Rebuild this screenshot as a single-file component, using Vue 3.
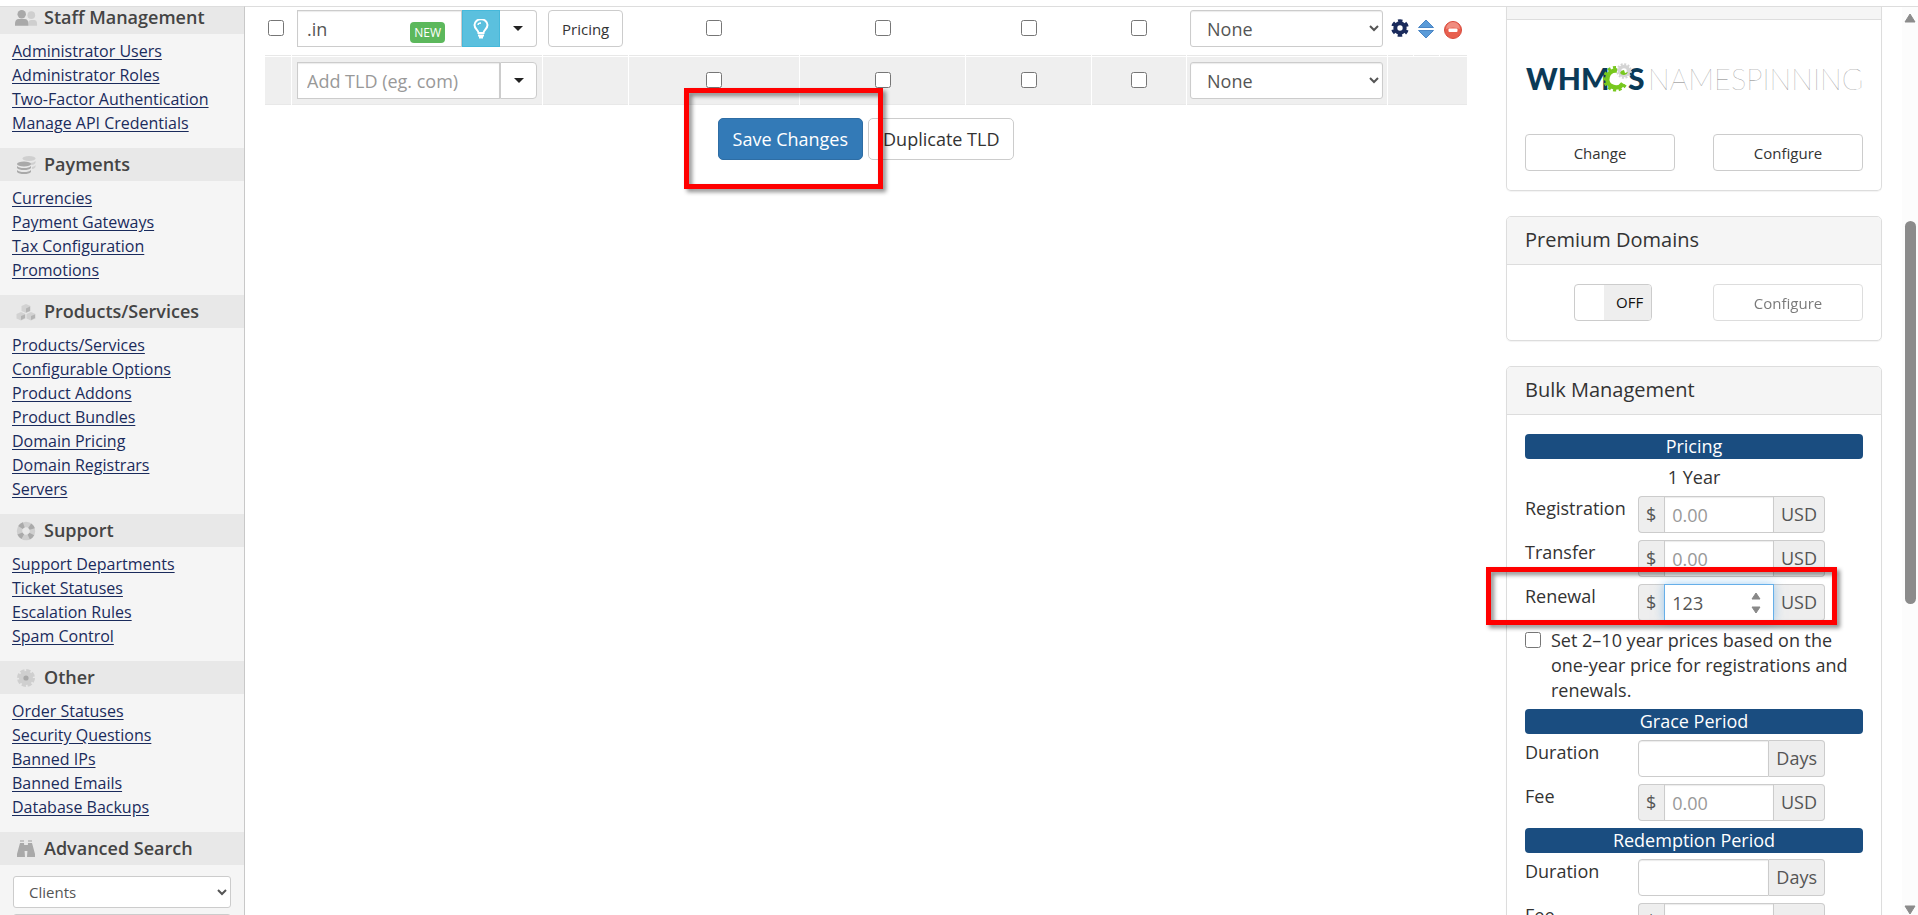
<template>
    <div class="page">
        <aside class="sidebar">
            <section v-for="group in menu" :key="group.title" class="menu-group">
                <h2 class="menu-title">
                    <svg v-if="group.icon === 'users'" class="menu-icon wide" viewBox="0 0 24 20">
                        <g fill="#cfcfcf">
                            <circle cx="17" cy="7" r="4" />
                            <path d="M14 18v-3q0-3 3-3h3q3 0 3 4v2z" />
                        </g>
                        <g fill="#a9a9a9">
                            <circle cx="7" cy="6" r="4.4" />
                            <path d="M0 18v-2q0-5 4-5h6q4 0 4 5v2z" />
                        </g>
                    </svg>
                    <svg v-else-if="group.icon === 'coins'" class="menu-icon" viewBox="0 0 20 20">
                        <g fill="#cfcfcf">
                            <ellipse cx="13" cy="3.5" rx="6.5" ry="2.5" />
                            <path d="M14 8q4 0 5.500-2v2q-1 2-4 2zM16 12q3-.5 3.500-2v2q-1 2-3.500 2z" />
                        </g>
                        <g fill="#a9a9a9">
                            <ellipse cx="8" cy="9" rx="7" ry="2.500" />
                            <path d="M1 11q2 2 7 2t7-2v2q-2 2-7 2t-7-2zM1 15q2 2 7 2t7-2v2q-2 2-7 2t-7-2z" />
                        </g>
                    </svg>
                    <svg v-else-if="group.icon === 'boxes'" class="menu-icon" viewBox="0 0 20 20">
                        <g fill="#d2d2d2">
                            <path d="M10 2l4.500 2v5L10 11 5.500 9V4z" />
                            <path d="M5 10l4.500 2v4.500L5 18.500.5 16.500V12z" />
                            <path d="M15 10l4.500 2v4.500l-4.500 2-4.500-2V12z" />
                        </g>
                        <path d="M10 6.500l4-2V9l-4 1.500zM5 14l4-1.500v3.500l-4 2zM15 14l4-1.500v3.500l-4 2z" fill="#b4b4b4" />
                    </svg>
                    <svg v-else-if="group.icon === 'ring'" class="menu-icon" viewBox="0 0 20 20">
                        <circle cx="10" cy="10" r="6.500" fill="none" stroke="#cfcfcf" stroke-width="5.500" />
                        <circle cx="10" cy="10" r="6.500" fill="none" stroke="#aaaaaa" stroke-width="5.500" stroke-dasharray="4 6.210" stroke-dashoffset="-3.100" />
                    </svg>
                    <svg v-else-if="group.icon === 'cog'" class="menu-icon" viewBox="0 0 20 20">
                        <circle cx="10" cy="10" r="7" fill="#cfcfcf" />
                        <circle cx="10" cy="10" r="7.500" fill="none" stroke="#cfcfcf" stroke-width="3" stroke-dasharray="4.200 1.690" />
                        <circle cx="10" cy="10" r="2.600" fill="#a9a9a9" />
                    </svg>
                    <svg v-else class="menu-icon" viewBox="0 0 20 20">
                        <path d="M4 1h4v2H4zM12 1h4v2h-4z" fill="#c4c4c4" />
                        <path d="M4 4h4l1 14H1v-3zM12 4h4l3 11v3h-8zM8 6h4v6H8z" fill="#a9a9a9" />
                    </svg>
                    {{ group.title }}
                </h2>
                <ul v-if="group.links.length" class="menu-links">
                    <li v-for="link in group.links" :key="link"><a href="#">{{ link }}</a></li>
                </ul>
            </section>
            <form class="search" @submit.prevent>
                <select v-model="searchType" aria-label="Search type">
                    <option>Clients</option>
                </select>
                <select v-model="searchField" aria-label="Search field">
                    <option>Client Name</option>
                </select>
            </form>
        </aside>

        <main class="content">
            <div class="tld-area">
                <table class="tlds">
                    <colgroup>
                        <col v-for="(col, index) in cols" :key="index" :class="col">
                    </colgroup>
                    <tbody>
                        <tr>
                            <td class="center select-cell"><input type="checkbox" aria-label="Select .in"></td>
                            <td>
                                <div class="tld-input">
                                    <input v-model="tld" class="field" type="text" aria-label="TLD">
                                    <span class="badge-new">NEW</span>
                                    <button class="spotlight" type="button" aria-label="Spotlight">
                                        <svg width="16" height="20" viewBox="0 0 16 20" fill="none" stroke="#fff" stroke-width="2">
                                            <path d="M5.500 14c0-3-4-4-4-8a6.300 5.500 0 0 1 13 0c0 4-4 5-4 8z" />
                                            <path d="M5 6q0-2 3-2" stroke-width="1.300" />
                                            <path d="M5 16.500h6M6 18.500h4" />
                                        </svg>
                                    </button>
                                    <button class="drop" type="button" aria-label="TLD options"><i class="caret"></i></button>
                                </div>
                            </td>
                            <td><button class="btn btn-sm btn-pricing" type="button">Pricing</button></td>
                            <td v-for="option in options" :key="option" class="center">
                                <input type="checkbox" :aria-label="option">
                            </td>
                            <td class="registrar">
                                <select class="field" aria-label="Auto registration">
                                    <option>None</option>
                                </select>
                            </td>
                            <td class="icon-cell">
                                <svg width="18" height="18" viewBox="0 0 18 18">
                                    <circle cx="9" cy="9" r="4.700" fill="none" stroke="#1a2b5c" stroke-width="4" />
                                    <circle cx="9" cy="9" r="7.200" fill="none" stroke="#1a2b5c" stroke-width="3.200" stroke-dasharray="4.200 3.340" stroke-dashoffset="2.100" transform="rotate(30 9 9)" />
                                </svg>
                            </td>
                            <td class="icon-cell">
                                <svg width="18" height="20" viewBox="0 0 18 20">
                                    <path d="M9 1l7.500 7.500H1.500z" fill="#5b9bd8" stroke="#4a86c5" />
                                    <path d="M9 19l7.500-7.500H1.500z" fill="#5b9bd8" stroke="#4a86c5" />
                                </svg>
                            </td>
                            <td class="icon-cell">
                                <svg width="20" height="20" viewBox="0 0 20 20">
                                    <circle cx="10" cy="11" r="8.500" fill="#e8604f" stroke="#d84a3c" />
                                    <path d="M3 10a7 7 0 0 1 14 0q-7-3-14 0z" fill="#f08d80" />
                                    <rect x="5.500" y="9.500" width="9" height="3.500" rx="1" fill="#fff" />
                                </svg>
                            </td>
                        </tr>
                        <tr class="add-row">
                            <td></td>
                            <td>
                                <div class="tld-input">
                                    <input class="field" type="text" placeholder="Add TLD (eg. com)" aria-label="Add TLD">
                                    <button class="drop" type="button" aria-label="TLD options"><i class="caret"></i></button>
                                </div>
                            </td>
                            <td></td>
                            <td v-for="option in options" :key="option" class="center">
                                <input type="checkbox" :aria-label="option">
                            </td>
                            <td class="registrar">
                                <select class="field" aria-label="Auto registration">
                                    <option>None</option>
                                </select>
                            </td>
                            <td colspan="3"></td>
                        </tr>
                    </tbody>
                </table>
                <div class="actions">
                    <span class="marked">
                        <button class="btn btn-primary" type="button">Save Changes</button>
                        <span class="marker marker-save"></span>
                    </span>
                    <button class="btn" type="button">Duplicate TLD</button>
                </div>
            </div>

            <div class="panels">
                <section class="panel panel-lookup">
                    <div class="panel-edge"></div>
                    <div class="panel-body">
                        <svg class="logo" viewBox="0 0 338 32" role="img" aria-label="WHMCS Namespinning">
                            <text x="1" y="29" class="logo-bold">WHM</text>
                            <text x="103" y="29" class="logo-bold">S</text>
                            <circle cx="99" cy="10" r="4.500" fill="none" stroke="#d4d4d4" stroke-width="3.500" />
                            <circle cx="99" cy="10" r="6.800" fill="none" stroke="#d4d4d4" stroke-width="2" stroke-dasharray="2 1.560" />
                            <path d="M92 9.500a8.500 8.500 0 1 0 6 13" fill="none" stroke="#78c81e" stroke-width="4.500" />
                            <path d="M91 6.500a11.300 11.300 0 1 0 10 16" fill="none" stroke="#78c81e" stroke-width="3" stroke-dasharray="3 2.500" />
                            <path d="M95 12a4.500 4.500 0 0 0 8-1l-3 1-1-3a4.500 4.500 0 0 0-4 3z" fill="#78c81e" />
                            <text x="123" y="29" class="logo-thin">NAMESPINNING</text>
                        </svg>
                        <div class="button-row">
                            <button class="btn btn-sm" type="button">Change</button>
                            <button class="btn btn-sm" type="button">Configure</button>
                        </div>
                    </div>
                </section>

                <section class="panel">
                    <h3 class="panel-title">Premium Domains</h3>
                    <div class="panel-body button-row">
                        <label class="toggle">
                            <input v-model="premium" type="checkbox">
                            <span class="toggle-text">{{ premium ? 'ON' : 'OFF' }}</span>
                        </label>
                        <button class="btn btn-sm" type="button" disabled>Configure</button>
                    </div>
                </section>

                <section class="panel">
                    <h3 class="panel-title">Bulk Management</h3>
                    <div class="panel-body">
                        <template v-for="group in bulk" :key="group.title">
                            <h4 class="bar">{{ group.title }}</h4>
                            <p v-if="group.term" class="term">{{ group.term }}</p>
                            <div v-for="row in group.rows" :key="row.id" class="bulk-row">
                                <label :for="row.id">{{ row.label }}</label>
                                <div class="input-group" :class="{ focused: row.focused }">
                                    <span v-if="row.unit === 'USD'" class="addon addon-left">$</span>
                                    <div class="amount">
                                        <input :id="row.id" v-model="row.value" type="number" :placeholder="row.unit === 'USD' ? '0.00' : ''">
                                        <svg v-if="row.focused" class="spin" width="10" height="22" viewBox="0 0 10 22">
                                            <path d="M5 1l4 6H1zM5 21l4-6H1z" fill="#888" stroke="#888" stroke-linejoin="round" />
                                        </svg>
                                    </div>
                                    <span class="addon addon-right">{{ row.unit }}</span>
                                </div>
                                <span v-if="row.focused" class="marker marker-renewal"></span>
                            </div>
                            <label v-if="group.note" class="note">
                                <input v-model="multiYear" type="checkbox">
                                <span>{{ group.note }}</span>
                            </label>
                        </template>
                    </div>
                </section>
            </div>
        </main>

        <div class="scrollbar">
            <svg width="12" height="10" viewBox="0 0 12 10"><path d="M6 1l5 8H1z" fill="#8b8b8b" stroke="#8b8b8b" stroke-linejoin="round" /></svg>
            <div class="track"><div class="thumb"></div></div>
            <svg width="12" height="10" viewBox="0 0 12 10"><path d="M6 9l5-8H1z" fill="#8b8b8b" stroke="#8b8b8b" stroke-linejoin="round" /></svg>
        </div>
    </div>
</template>

<script setup>
import { ref, reactive } from 'vue'

const menu = [
    { title: 'Staff Management', icon: 'users', links: ['Administrator Users', 'Administrator Roles', 'Two-Factor Authentication', 'Manage API Credentials'] },
    { title: 'Payments', icon: 'coins', links: ['Currencies', 'Payment Gateways', 'Tax Configuration', 'Promotions'] },
    { title: 'Products/Services', icon: 'boxes', links: ['Products/Services', 'Configurable Options', 'Product Addons', 'Product Bundles', 'Domain Pricing', 'Domain Registrars', 'Servers'] },
    { title: 'Support', icon: 'ring', links: ['Support Departments', 'Ticket Statuses', 'Escalation Rules', 'Spam Control'] },
    { title: 'Other', icon: 'cog', links: ['Order Statuses', 'Security Questions', 'Banned IPs', 'Banned Emails', 'Database Backups'] },
    { title: 'Advanced Search', icon: 'binoculars', links: [] }
]

const cols = ['c-select', 'c-tld', 'c-pricing', 'c-dns', 'c-email', 'c-id', 'c-epp', 'c-registrar', 'c-icon', 'c-icon', 'c-icon-last']
const options = ['DNS Management', 'Email Forwarding', 'ID Protection', 'EPP Code']

const searchType = ref('Clients')
const searchField = ref('Client Name')
const tld = ref('.in')
const premium = ref(false)
const multiYear = ref(false)

const bulk = reactive([
    {
        title: 'Pricing',
        term: '1 Year',
        rows: [
            { id: 'registration', label: 'Registration', unit: 'USD', value: '' },
            { id: 'transfer', label: 'Transfer', unit: 'USD', value: '' },
            { id: 'renewal', label: 'Renewal', unit: 'USD', value: '123', focused: true }
        ],
        note: 'Set 2–10 year prices based on the one-year price for registrations and renewals.'
    },
    {
        title: 'Grace Period',
        rows: [
            { id: 'grace-duration', label: 'Duration', unit: 'Days', value: '' },
            { id: 'grace-fee', label: 'Fee', unit: 'USD', value: '' }
        ]
    },
    {
        title: 'Redemption Period',
        rows: [
            { id: 'redemption-duration', label: 'Duration', unit: 'Days', value: '' },
            { id: 'redemption-fee', label: 'Fee', unit: 'USD', value: '' }
        ]
    }
])
</script>

<style>
body {
    margin: 0;
    overflow: hidden;
    background: #fff;
}
</style>

<style scoped>
.page,
.page * {
    box-sizing: border-box;
}

.page {
    display: flex;
    height: 100vh;
    padding-top: 6px;
    overflow: hidden;
    color: #333;
    font-family: "Open Sans", "Noto Sans", sans-serif;
    font-size: 18px;
    line-height: 25px;
}

button,
input,
select {
    margin: 0;
    font-family: inherit;
}

h2,
h3,
h4,
p,
ul {
    margin: 0;
    padding: 0;
    font-weight: 400;
}

input[type="checkbox"] {
    width: 16px;
    height: 16px;
}

/* Sidebar */
.sidebar {
    flex: 0 0 245px;
    overflow: hidden;
    border-top: 1px solid #ddd;
    border-right: 1px solid #c8c8c8;
    background: #f5f5f5;
}

.menu-title {
    display: flex;
    align-items: center;
    gap: 8px;
    height: 33px;
    padding-left: 15px;
    background: #e8e8e8;
    color: #444;
    font-size: 18px;
    font-weight: 600;
}

.menu-group:first-child .menu-title {
    height: 27px;
    padding-bottom: 6px;
}

.menu-icon {
    width: 20px;
    height: 20px;
    margin-left: 1px;
}

.menu-icon.wide {
    width: 23px;
    margin: 0 -2px 0 0;
}

.menu-links {
    padding: 5px 12px 13px;
    list-style: none;
    font-size: 16px;
    line-height: 24px;
}

.menu-links a {
    color: #1a2b5c;
    text-decoration: underline;
    text-underline-offset: 2px;
}

.search {
    display: flex;
    flex-direction: column;
    gap: 6px;
    padding: 11px 13px;
}

.search select {
    height: 32px;
    padding: 0 0 0 11px;
    border: 1px solid #ccc;
    border-radius: 3px;
    background: #fff;
    color: #555;
    font-size: 15px;
}

/* Content */
.content {
    flex: 1;
    display: grid;
    grid-template-columns: minmax(0, 1fr) 376px;
    align-items: start;
    gap: 38px;
    min-width: 0;
    padding: 0 20px 0 19px;
    overflow: hidden;
    border-top: 1px solid #ddd;
}

.tlds {
    width: 100%;
    table-layout: fixed;
    border-spacing: 1px;
}

.c-select { width: 26px; }
.c-tld { width: 250px; }
.c-pricing { width: 85px; }
.c-dns { width: 14.3%; }
.c-email { width: 13.8%; }
.c-id { width: 10.5%; }
.c-registrar { width: 200px; }
.c-icon { width: 25px; }
.c-icon-last { width: 27px; }

.tlds td {
    height: 48px;
    padding: 2px 5px 8px;
    border-bottom: 1px solid #e8e8e8;
    vertical-align: top;
}

.tlds .add-row td {
    padding-top: 5px;
    padding-bottom: 5px;
    background: #efefef;
}

.tlds td.center {
    padding-right: 0;
    padding-left: 0;
    text-align: center;
}

.tlds td.select-cell {
    padding-right: 4px;
}

.tlds td.center input {
    display: block;
    margin: 10px auto 0;
}

.tlds td.registrar {
    padding-right: 4px;
    padding-left: 3px;
}

.tlds td.icon-cell {
    padding: 11px 0 0 3px;
}

.icon-cell svg {
    display: block;
}

.field {
    width: 100%;
    height: 37px;
    padding: 0 9px;
    border: 1px solid #ccc;
    border-radius: 0;
    background: #fff;
    box-shadow: inset 0 1px 1px rgba(0, 0, 0, 0.08);
    color: #555;
    font-size: 18px;
}

select.field {
    padding: 0 0 0 12px;
    border-radius: 3px;
}

.field::placeholder,
.amount input::placeholder {
    color: #999;
    opacity: 1;
}

.tld-input {
    position: relative;
    display: flex;
}

.tld-input .field {
    flex: 1;
    min-width: 0;
}

.badge-new {
    position: absolute;
    top: 12px;
    right: 92px;
    padding: 0 4px;
    border-radius: 4px;
    background: #5cb85c;
    color: #fff;
    font-size: 12px;
    line-height: 21px;
}

.spotlight,
.drop {
    display: flex;
    align-items: center;
    justify-content: center;
    flex: 0 0 38px;
    height: 37px;
    padding: 0;
    border: 1px solid #ccc;
    background: #fff;
}

.spotlight {
    border-color: #46b8da;
    background: #5bc0de;
}

.drop {
    flex-basis: 37px;
    border-radius: 0 4px 4px 0;
}

.spotlight + .drop {
    border-left: 0;
}

.caret {
    border: 5px solid transparent;
    border-top-color: #222;
    border-bottom: 0;
}

.btn {
    height: 42px;
    padding: 0 14px;
    border: 1px solid #ccc;
    border-radius: 5px;
    background: #fff;
    color: #333;
    font-size: 18px;
}

.btn-primary {
    border-color: #2e6da4;
    background: #337ab7;
    color: #fff;
}

.btn-sm {
    height: 37px;
    padding: 0 13px;
    border-radius: 4px;
    font-size: 15px;
}

.btn:disabled {
    opacity: 0.65;
}

.btn-pricing {
    width: 75px;
}

.actions {
    display: flex;
    justify-content: center;
    gap: 5px;
    margin-top: 12px;
}

.marked {
    position: relative;
}

.marker {
    position: absolute;
    border: 5px solid #f00;
    filter: drop-shadow(3px 3px 2px rgba(0, 0, 0, 0.45));
    pointer-events: none;
}

.marker-save {
    top: -30px;
    right: -20px;
    bottom: -29px;
    left: -34px;
}

/* Panels */
.panel {
    margin-bottom: 25px;
    border: 1px solid #ddd;
    border-radius: 5px;
    box-shadow: 0 1px 1px rgba(0, 0, 0, 0.05);
}

.panel-lookup {
    border-top: 0;
    border-radius: 0 0 5px 5px;
}

.panel-edge {
    height: 13px;
    border-bottom: 1px solid #ddd;
    background: #f5f5f5;
}

.panel-title {
    height: 48px;
    padding: 0 18px;
    border-bottom: 1px solid #ddd;
    border-radius: 4px 4px 0 0;
    background: #f5f5f5;
    font-size: 20px;
    line-height: 46px;
}

.panel-body {
    padding: 19px 18px;
}

.logo {
    display: block;
    width: 100%;
    margin: 22px 0 41px;
    overflow: visible;
}

.logo-bold {
    fill: #0b3a57;
    font-family: Lato, sans-serif;
    font-size: 30px;
    font-weight: 900;
}

.logo-thin {
    fill: #7c7c7c;
    font-family: Lato, sans-serif;
    font-size: 29px;
    font-weight: 100;
}

.button-row {
    display: flex;
    justify-content: space-between;
}

.button-row .btn {
    width: 150px;
}

.toggle {
    position: relative;
    display: flex;
    justify-content: flex-end;
    width: 78px;
    height: 37px;
    margin-left: 49px;
    overflow: hidden;
    border: 1px solid #ccc;
    border-radius: 4px;
    font-size: 15px;
    line-height: 35px;
}

.toggle input {
    position: absolute;
    inset: 0;
    opacity: 0;
}

.toggle-text {
    width: 47px;
    padding-left: 12px;
    background: #eee;
    color: #111;
}

.bar {
    margin-bottom: 6px;
    border-radius: 4px;
    background: #1a4d80;
    color: #fff;
    font-size: 18px;
    text-align: center;
}

.term {
    margin-bottom: 6px;
    text-align: center;
}

.bulk-row {
    position: relative;
    display: grid;
    grid-template-columns: 113px 187px;
    align-items: start;
    margin-bottom: 7px;
}

.input-group {
    display: flex;
    height: 37px;
}

.addon {
    padding: 0 7px;
    border: 1px solid #ccc;
    background: #eee;
    color: #555;
    line-height: 35px;
}

.addon-left {
    padding: 0 8px 0 7px;
    border-right: 0;
    border-radius: 4px 0 0 4px;
}

.addon-right {
    border-left: 0;
    border-radius: 0 4px 4px 0;
}

.amount {
    position: relative;
    flex: 1;
    min-width: 0;
}

.amount input {
    width: 100%;
    height: 37px;
    padding: 0 7px;
    border: 1px solid #ccc;
    border-radius: 0;
    box-shadow: inset 0 1px 1px rgba(0, 0, 0, 0.08);
    color: #555;
    font-size: 18px;
    appearance: textfield;
}

.amount:first-child input {
    border-radius: 4px 0 0 4px;
}

.amount input::-webkit-inner-spin-button {
    display: none;
}

.focused .amount input {
    border-color: #66afe9;
    outline: 0;
    box-shadow: 0 0 10px rgba(102, 175, 233, 0.6);
}

.spin {
    position: absolute;
    top: 8px;
    right: 13px;
}

.marker-renewal {
    top: -17px;
    right: 26px;
    bottom: -4px;
    left: -39px;
    z-index: 1;
}

.note {
    display: grid;
    grid-template-columns: 16px 1fr;
    gap: 10px;
    margin-bottom: 6px;
}

.note input {
    margin-top: 4px;
}

/* Scrollbar */
.scrollbar {
    display: flex;
    flex: 0 0 16px;
    flex-direction: column;
    align-items: center;
    padding: 6px 0 0;
    border-top: 1px solid #ddd;
    background: #fcfcfc;
}

.track {
    flex: 1;
    width: 11px;
    padding-top: 198px;
}

.thumb {
    height: 56%;
    border-radius: 6px;
    background: #8b8b8b;
}
</style>
